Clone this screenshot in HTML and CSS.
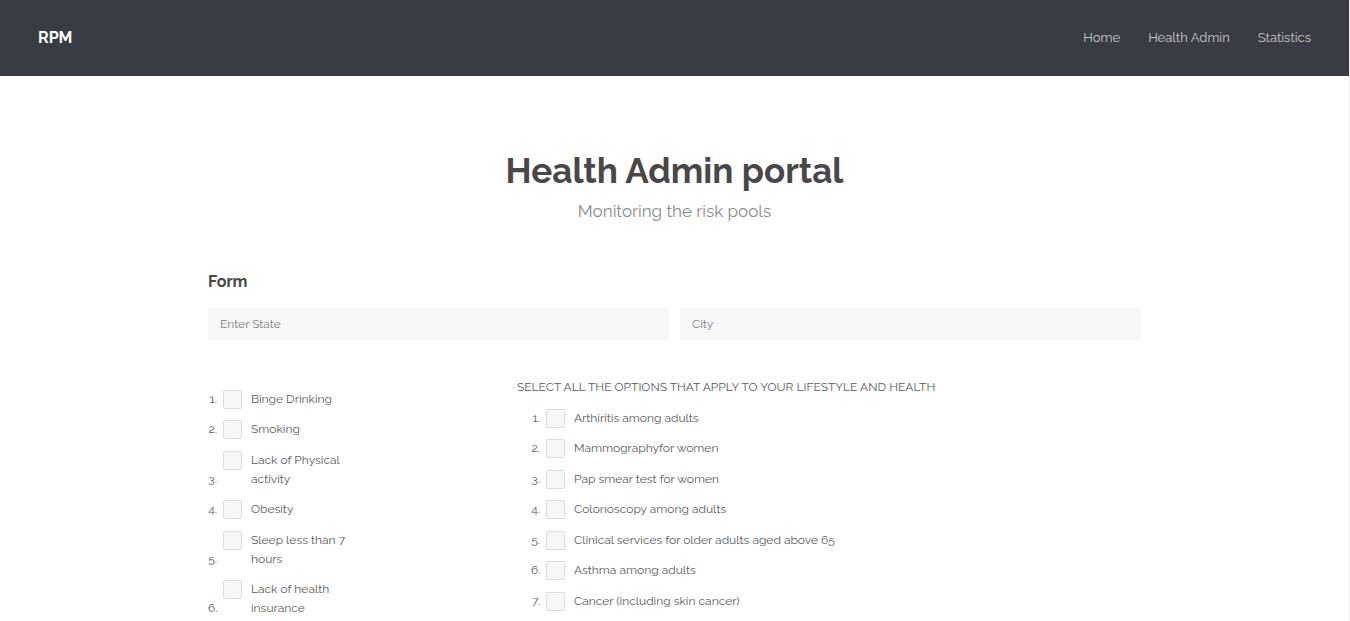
FILE: index.html
```html
<!DOCTYPE html>
<html lang="en">
<head>
<meta charset="utf-8">
<meta name="viewport" content="width=device-width, initial-scale=1">
<title>Health Admin portal</title>
<link rel="stylesheet" href="styles.css">
</head>
<body>
<header class="site-header">
  <a class="brand" href="#">RPM</a>
  <nav class="site-nav">
    <a href="#">Home</a>
    <a href="#">Health Admin</a>
    <a href="#">Statistics</a>
  </nav>
</header>
<main class="container">
  <div class="intro">
    <h1>Health Admin portal</h1>
    <p>Monitoring the risk pools</p>
  </div>
  <h2 class="form-title">Form</h2>
  <form>
    <div class="fields">
      <input type="text" aria-label="Enter State" placeholder="Enter State">
      <input type="text" aria-label="City" placeholder="City">
    </div>
    <div class="options">
      <ol class="checklist checklist-behaviour">
        <li><span class="num">1.</span><input type="checkbox" id="binge"><label for="binge">Binge Drinking</label></li>
        <li><span class="num">2.</span><input type="checkbox" id="smoking"><label for="smoking">Smoking</label></li>
        <li><span class="num">3.</span><input type="checkbox" id="activity"><label for="activity">Lack of Physical activity</label></li>
        <li><span class="num">4.</span><input type="checkbox" id="obesity"><label for="obesity">Obesity</label></li>
        <li><span class="num">5.</span><input type="checkbox" id="sleep"><label for="sleep">Sleep less than 7 hours</label></li>
        <li><span class="num">6.</span><input type="checkbox" id="insurance"><label for="insurance">Lack of health insurance</label></li>
      </ol>
      <section class="conditions">
        <p class="prompt">SELECT ALL THE OPTIONS THAT APPLY TO YOUR LIFESTYLE AND HEALTH</p>
        <ol class="checklist">
          <li><span class="num">1.</span><input type="checkbox" id="arthritis"><label for="arthritis">Arthiritis among adults</label></li>
          <li><span class="num">2.</span><input type="checkbox" id="mammo"><label for="mammo">Mammographyfor women</label></li>
          <li><span class="num">3.</span><input type="checkbox" id="pap"><label for="pap">Pap smear test for women</label></li>
          <li><span class="num">4.</span><input type="checkbox" id="colon"><label for="colon">Colonoscopy among adults</label></li>
          <li><span class="num">5.</span><input type="checkbox" id="clinical"><label for="clinical">Clinical services for older adults aged above 65</label></li>
          <li><span class="num">6.</span><input type="checkbox" id="asthma"><label for="asthma">Asthma among adults</label></li>
          <li><span class="num">7.</span><input type="checkbox" id="cancer"><label for="cancer">Cancer (including skin cancer)</label></li>
        </ol>
      </section>
    </div>
  </form>
</main>
</body>
</html>
```

FILE: styles.css
```css
* {
  box-sizing: border-box;
}

body {
  margin: 0;
  min-height: 100vh;
  border-right: 1px solid #eeeeee;
  background: #ffffff;
  color: #5a5a5a;
  font-family: Raleway, Lato, sans-serif;
  font-size: 12px;
  line-height: 19px;
}

h1, h2, p, ol {
  margin: 0;
  padding: 0;
}

.site-header {
  display: flex;
  align-items: center;
  justify-content: space-between;
  height: 76px;
  padding: 0 38px 2px;
  background: #3a3c45;
}

.site-header a {
  text-decoration: none;
}

.brand {
  color: #ffffff;
  font-size: 16px;
  font-weight: 700;
}

.site-nav {
  display: flex;
  gap: 28px;
  font-size: 13px;
}

.site-nav a {
  color: #c8c8cb;
}

.container {
  width: 70%;
  max-width: 933px;
  margin: 0 auto;
  padding-top: 72px;
}

.intro {
  text-align: center;
}

.intro h1 {
  margin-bottom: 2px;
  color: #484848;
  font-size: 35px;
  font-weight: 700;
  line-height: 46px;
}

.intro p {
  color: #8c8c8c;
  font-size: 17px;
  line-height: 30px;
}

.form-title {
  margin-top: 44px;
  color: #484848;
  font-size: 16px;
  line-height: 24px;
}

.fields {
  display: grid;
  grid-template-columns: 1fr 1fr;
  gap: 11px;
  margin-top: 14px;
}

.fields input {
  width: 100%;
  height: 32px;
  padding: 0 12px;
  border: 0;
  border-radius: 2px;
  background: #f7f7f7;
  color: #5a5a5a;
  font: inherit;
}

.fields input::placeholder {
  color: #808080;
}

.options {
  display: grid;
  grid-template-columns: 309px 1fr;
  margin-top: 38px;
}

.checklist {
  list-style: none;
}

.checklist li {
  display: flex;
  margin-bottom: 11px;
}

.checklist li:nth-child(even) {
  margin-bottom: 12px;
}

.checklist-behaviour {
  width: 138px;
  padding-top: 12px;
}

.num {
  flex: none;
  align-self: flex-end;
  width: 9px;
  margin-right: 6px;
  text-align: right;
  white-space: nowrap;
}

.checklist input {
  flex: none;
  appearance: none;
  width: 19px;
  height: 19px;
  margin: 0 9px 0 0;
  border: 1px solid #dddddd;
  border-radius: 2px;
  background: #f7f7f7;
}

.checklist input:checked {
  background: #3a3c45;
}

.conditions .checklist {
  margin-top: 12px;
  padding-left: 14px;
}
```
